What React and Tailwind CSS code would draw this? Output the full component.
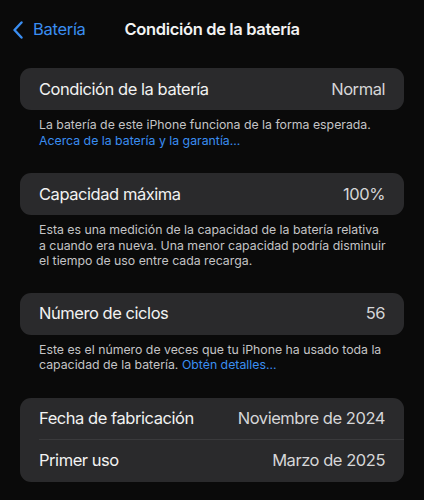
import React from "react";

const Row = ({ label, value, divider }) => (
  <div className="relative flex items-center justify-between h-[42px] pl-[19px] pr-[19px]">
    <span className="text-[16.5px] tracking-[-0.45px] text-[#f2f2f2]">{label}</span>
    <span className="text-[16.5px] tracking-[-0.45px] text-[#d6d6d8]">{value}</span>
    {divider && <div className="absolute bottom-0 left-[19px] right-0 h-px bg-[#3a3a3c]" />}
  </div>
);

const Note = ({ children }) => (
  <p className="pl-[19px] pr-[12px] pt-[7px] text-[12.3px] leading-[15.5px] text-[#c4c4c6]">{children}</p>
);

const App = () => {
  return (
    <div
      className="w-[424px] h-[500px] bg-[#0a0a0a] overflow-hidden"
      style={{ fontFamily: "Inter, 'Noto Sans', sans-serif" }}
    >
      {/* Header */}
      <div className="relative flex items-center h-[60px] pb-[1px]">
        <div className="flex items-center pl-[12px] text-[#3a8ef2]">
          <svg width="12" height="18" viewBox="0 0 12 18" fill="none">
            <path d="M9.5 1.5 L2.5 9 L9.5 16.5" stroke="#3a8ef2" strokeWidth="2.4" strokeLinecap="round" strokeLinejoin="round" />
          </svg>
          <span className="ml-[9px] text-[16.5px] tracking-[-0.3px]">Batería</span>
        </div>
        <span className="ml-[39px] text-[16.5px] tracking-[-0.35px] font-semibold text-[#f2f2f2]">Condición de la batería</span>
      </div>

      <div className="px-[20px] pt-[8px]">
        <div className="rounded-[11px] bg-[#2a2a2c]">
          <Row label="Condición de la batería" value="Normal" />
        </div>
        <Note>
          La batería de este iPhone funciona de la forma esperada.{" "}
          <span className="text-[#3a8ef2]">Acerca de la batería y la garantía...</span>
        </Note>

        <div className="mt-[25px] rounded-[11px] bg-[#2a2a2c]">
          <Row label="Capacidad máxima" value="100%" />
        </div>
        <Note>
          Esta es una medición de la capacidad de la batería relativa
          <br />
          a cuando era nueva. Una menor capacidad podría disminuir
          <br />
          el tiempo de uso entre cada recarga.
        </Note>

        <div className="mt-[24px] rounded-[11px] bg-[#2a2a2c]">
          <Row label="Número de ciclos" value="56" />
        </div>
        <Note>
          Este es el número de veces que tu iPhone ha usado toda la capacidad de la batería.{" "}
          <span className="text-[#3a8ef2]">Obtén detalles...</span>
        </Note>

        <div className="mt-[25px] rounded-[11px] bg-[#2a2a2c]">
          <Row label="Fecha de fabricación" value="Noviembre de 2024" divider />
          <Row label="Primer uso" value="Marzo de 2025" />
        </div>
      </div>
    </div>
  );
};

export default App;
